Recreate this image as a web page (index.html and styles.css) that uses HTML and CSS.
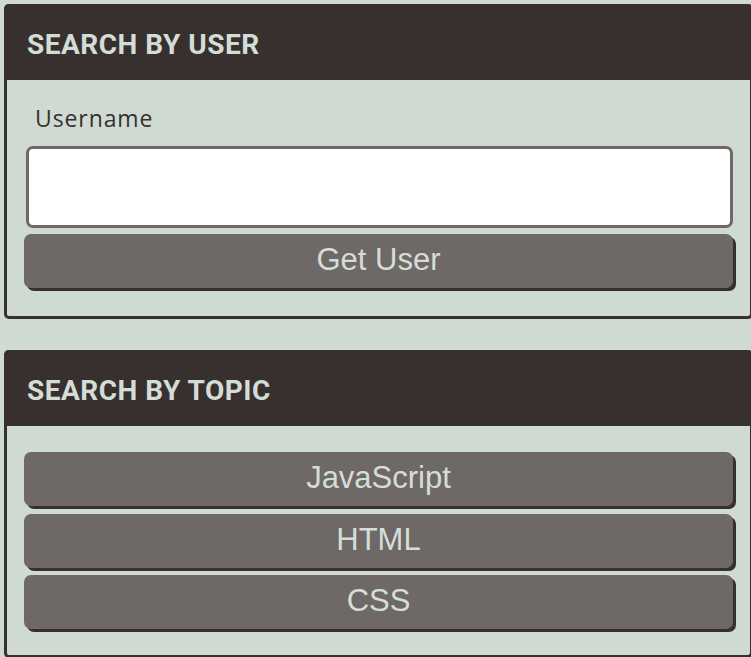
FILE: index.html
```html
<!DOCTYPE html>
<html lang="en">
<head>
<meta charset="utf-8">
<title>Search</title>
<link rel="stylesheet" href="styles.css">
</head>
<body>
<main class="page">
  <section class="card card-user">
    <h2 class="card-title">SEARCH BY USER</h2>
    <div class="card-body">
      <label class="field-label" for="username">Username</label>
      <input class="field-input" id="username" type="text">
      <button class="btn" type="button">Get User</button>
    </div>
  </section>
  <section class="card card-topic">
    <h2 class="card-title">SEARCH BY TOPIC</h2>
    <div class="card-body topic-list">
      <button class="btn" type="button">JavaScript</button>
      <button class="btn" type="button">HTML</button>
      <button class="btn" type="button">CSS</button>
    </div>
  </section>
</main>
</body>
</html>
```

FILE: styles.css
```css
html, body {
  margin: 0;
  padding: 0;
  overflow: hidden;
  background: #cfdad3;
}

.page {
  display: flex;
  flex-direction: column;
  gap: 31px;
  padding: 4px 0 0 4px;
  width: 749px;
}

.card {
  box-sizing: border-box;
  width: 749px;
  border: 3px solid #38302e;
  border-top: 0;
  border-radius: 5px;
  background: #cfdad3;
}

.card-title {
  margin: 0 -3px;
  height: 76px;
  box-sizing: border-box;
  padding: 4px 0 0 23px;
  display: flex;
  align-items: center;
  background: #38302e;
  color: #d3ddd7;
  font-family: Roboto, "Liberation Sans", sans-serif;
  font-weight: 700;
  font-size: 28px;
  letter-spacing: 0.5px;
  border-radius: 5px 5px 0 0;
}

.card-body {
  display: flex;
  flex-direction: column;
  padding: 23px 17px 28px 17px;
}

.field-label {
  margin-left: 11px;
  font-family: "Open Sans", "Liberation Sans", sans-serif;
  font-size: 23px;
  line-height: 30px;
  letter-spacing: 0.9px;
  color: #38302e;
}

.field-input {
  box-sizing: border-box;
  margin: 13px 0 0 2px;
  height: 82px;
  border: 3px solid #6e6966;
  border-radius: 7px;
  background: #fff;
  font-size: 22px;
  outline: none;
}

.btn {
  box-sizing: border-box;
  height: 54px;
  margin-top: 6px;
  padding: 0 0 2px 0;
  border: 0;
  border-radius: 7px;
  background: #6e6966;
  box-shadow: 3px 3px 0 #38302e;
  color: #d5ddd8;
  font-family: "Liberation Sans", Arial, sans-serif;
  font-size: 31px;
}

.card-topic .card-body {
  padding-top: 26px;
  padding-bottom: 26px;
  gap: 7.5px;
}

.card-topic .btn {
  margin-top: 0;
}
```
